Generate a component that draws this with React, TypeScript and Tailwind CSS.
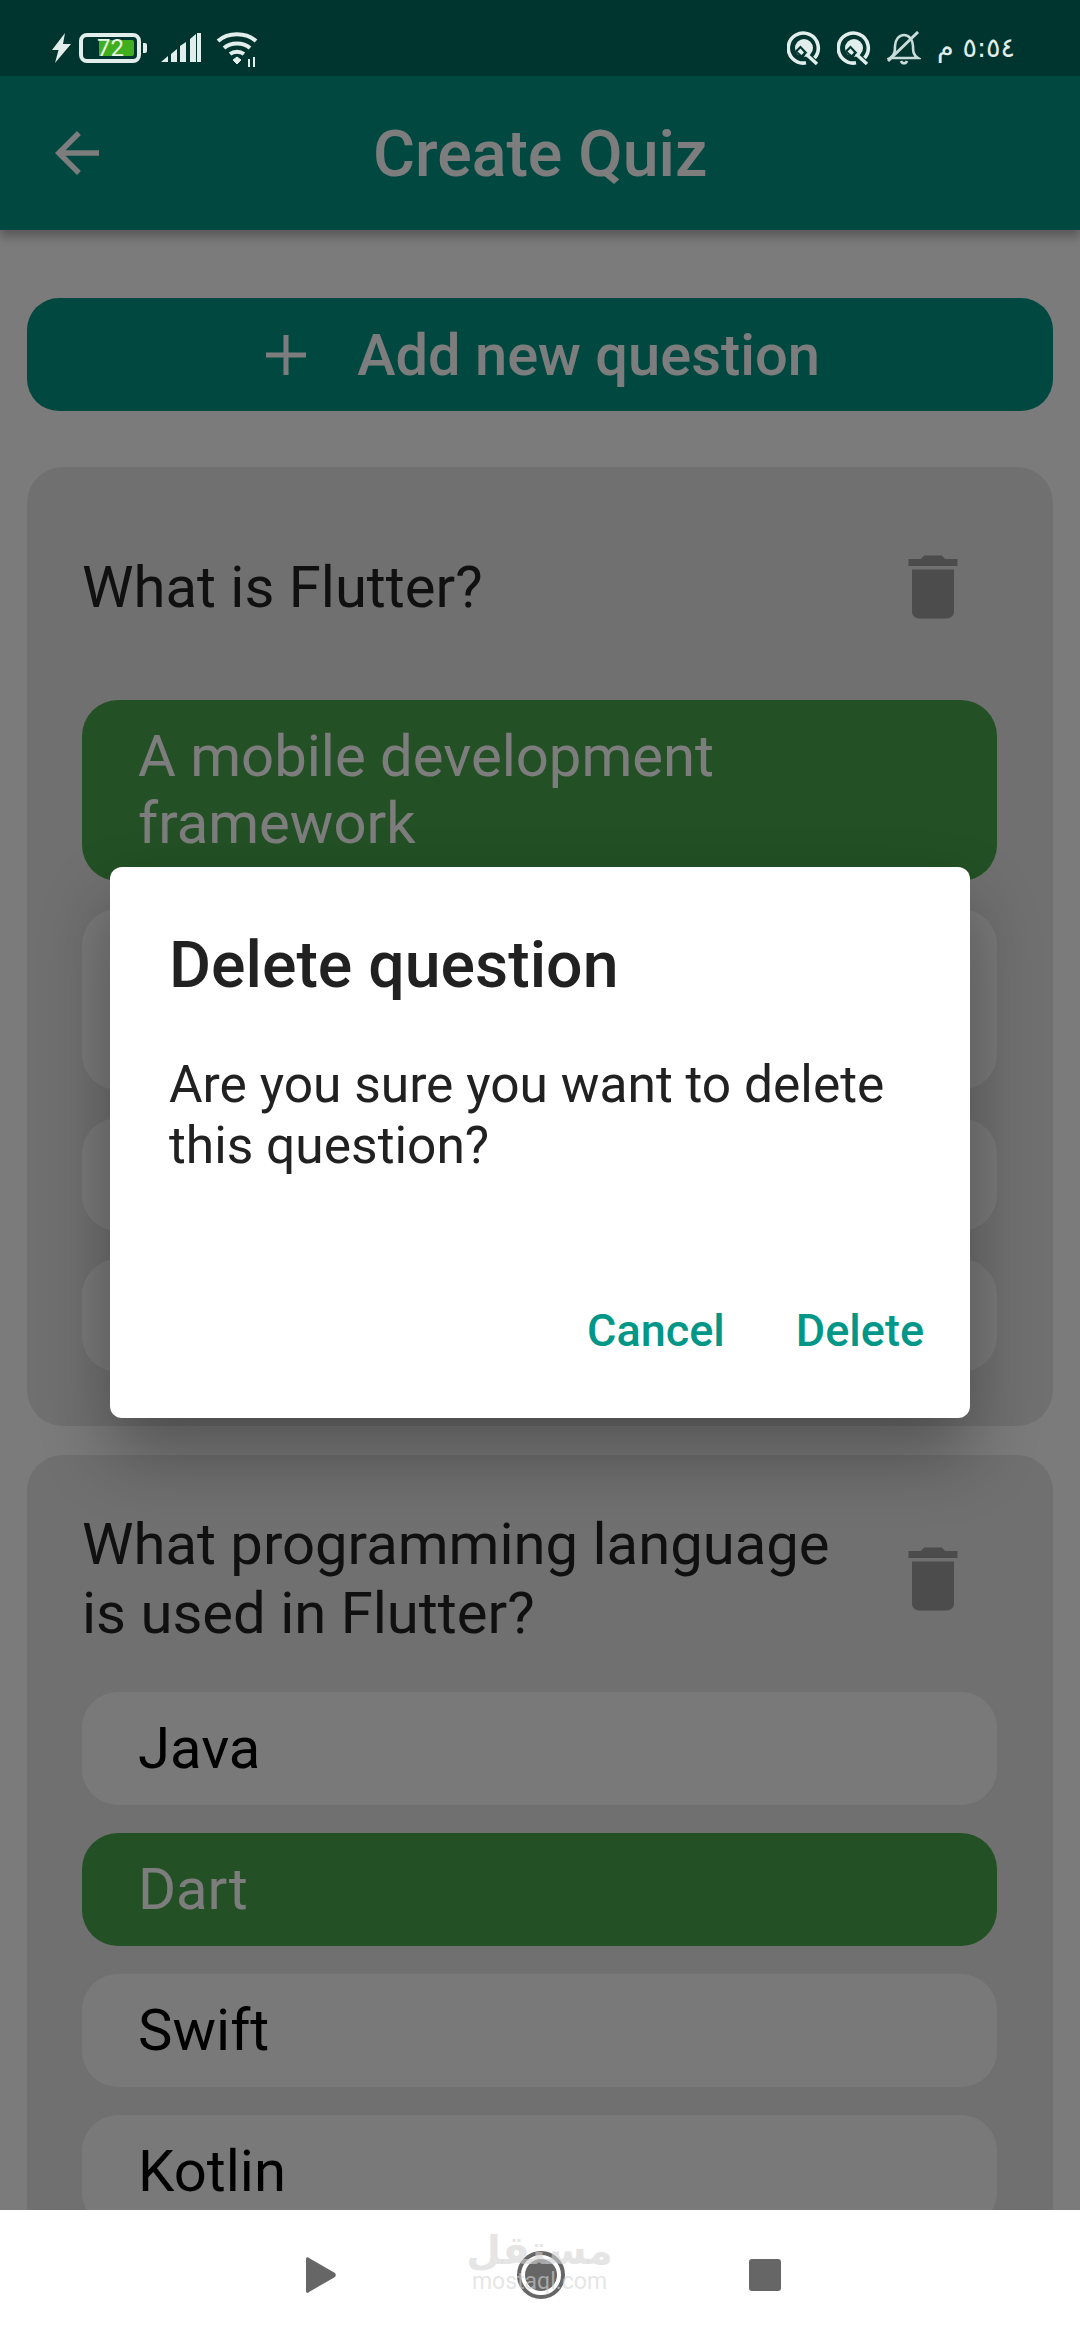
const Trash = () => (
  <svg viewBox="0 0 24 24" className="w-[84px] h-[84px] shrink-0" fill="#9b9b9b">
    <path d="M6 19c0 1.1.9 2 2 2h8c1.1 0 2-.9 2-2V7H6v12zM19 4h-3.5l-1-1h-5l-1 1H5v2h14V4z" />
  </svg>
);

const QIcon = () => (
  <svg width="34" height="34" viewBox="0 0 34 34" fill="none" className="mr-[16px]">
    <path d="M27.5 27 A15 15 0 1 0 19 31.8" stroke="#e2eeec" strokeWidth="3.6" fill="none" />
    <circle cx="17" cy="17" r="9" fill="#e2eeec" />
    <path d="M8 20 L13.5 14.5 L20.5 22 L15 28 Z" fill="#00352f" />
    <path d="M10.5 20.5 L13.5 17.5 L17 21.5 L14.5 24 Z" fill="#e2eeec" />
    <path d="M19 23 L30 33" stroke="#e2eeec" strokeWidth="3.4" />
  </svg>
);

const Option = ({ text, selected, tall }: { text?: string; selected?: boolean; tall?: boolean }) => (
  <div
    className={`rounded-[36px] px-[56px] py-[23px] text-[58px] leading-[67px] ${tall ? "h-[181px]" : "h-[113px]"} ${
      selected ? "bg-[#48a34c] text-white" : "bg-[#f7f7f7] text-black"
    }`}
  >
    {text}
  </div>
);

const Card = ({
  question,
  children,
  header,
}: {
  question: string;
  children: React.ReactNode;
  header: string;
}) => (
  <div className="rounded-[36px] bg-[#e4e4e4] pl-[55px] pr-[56px] pt-[55px] pb-[54px]">
    <div className={`flex items-center justify-between ${header}`}>
      <div className="w-[780px] text-[58px] leading-[69px] text-[#212121]">{question}</div>
      <div className="mr-[22px]">
        <Trash />
      </div>
    </div>
    <div className="flex flex-col gap-[28px]">{children}</div>
  </div>
);

export default function App() {
  return (
    <div
      className="relative w-[1080px] h-[2340px] overflow-hidden flex flex-col bg-white"
      style={{ fontFamily: "Roboto, 'Noto Sans', sans-serif" }}
    >
      <div className="relative h-[2210px] overflow-hidden bg-[#fafafa] flex flex-col shrink-0">
        {/* status bar */}
        <div className="relative z-30 h-[76px] shrink-0 bg-[#00352f] flex items-center justify-between pl-[52px] pr-[65px] pt-[24px] pb-[5px]">
          <div className="flex items-center">
            <svg width="19" height="30" viewBox="0 0 19 30" fill="#e2eeec" className="mr-[8px]">
              <path d="M13 0 L0 17 L6.5 17 L3 30 L19 11 L11 11 Z" />
            </svg>
            <div className="relative w-[62px] h-[30px] rounded-[8px] border-[4px] border-[#e2eeec] flex items-center">
              <div className="w-[35px] h-[16px] ml-[16px] rounded-r-[2px] bg-[#3fae1f]" />
              <div className="absolute left-[14px] top-[-4px] text-[24px] leading-[30px] text-[#e8f5e4]">72</div>
            </div>
            <div className="w-[4px] h-[10px] ml-[2px] rounded-r-[2px] bg-[#e2eeec]" />
            <svg width="40" height="30" viewBox="0 0 40 30" fill="#e2eeec" className="ml-[14px]">
              <path d="M0 29 L7 23 L7 29 Z M10 21 L16 16 L16 29 L10 29 Z M19 13 L25 9 L25 29 L19 29 Z M29 6 L35 1 L35 29 L29 29 Z" />
              <path d="M36 0 L40 0 L40 29 L36 29 Z" fill="#e2eeec" />
            </svg>
            <svg width="44" height="36" viewBox="0 0 44 36" fill="none" stroke="#e2eeec" className="ml-[15px] mt-[5px]">
              <path d="M2 9 C12 0 30 0 40 9" strokeWidth="4" />
              <path d="M8 16 C15 10 27 10 34 16" strokeWidth="4" />
              <path d="M14 22 C18 19 24 19 28 22" strokeWidth="4" />
              <path d="M17 28 L21 25 L25 28 L21 32 Z" fill="#e2eeec" strokeWidth="1" />
              <path d="M33 27 V35 M38 25 V35" strokeWidth="2" />
            </svg>
          </div>
          <div className="flex items-center">
            <QIcon />
            <QIcon />
            <svg width="34" height="34" viewBox="0 0 34 34" fill="none" stroke="#c9dcd9" strokeWidth="2.6" className="mr-[16px]">
              <path d="M3 27 C8 24 8 20 8 15 C8 9 12 4 17 4 C22 4 26 9 26 15 C26 20 26 24 31 27 Z" />
              <path d="M14 30 C15 33 19 33 20 30" />
              <path d="M1 30 L31 1" strokeWidth="3" />
            </svg>
            <div dir="rtl" className="text-[27px] leading-[34px] text-[#e2eeec]" style={{ fontFamily: "'DejaVu Sans', sans-serif" }}>
              ٥:٥٤ م
            </div>
          </div>
        </div>

        {/* app bar */}
        <div className="h-[154px] shrink-0 bg-[#009484] flex items-center relative z-10 shadow-[0_6px_10px_rgba(0,0,0,0.3)]">
          <svg viewBox="0 0 24 24" className="w-[66px] h-[66px] ml-[44px]" fill="#ffffff">
            <path d="M20 11H7.83l5.59-5.59L12 4l-8 8 8 8 1.41-1.41L7.83 13H20v-2z" />
          </svg>
          <div className="ml-[263px] pt-[2px] text-[64.4px] font-medium text-white leading-none">Create Quiz</div>
        </div>

        {/* content */}
        <div className="px-[27px] pt-[68px] flex flex-col">
          <div className="h-[113px] rounded-[32px] bg-[#009484] pl-[6px] flex items-center justify-center text-white mb-[56px]">
            <svg viewBox="0 0 40 40" className="w-[40px] h-[40px] mr-[51px]" fill="#ffffff">
              <path d="M17.5 0h5v17.5H40v5H22.5V40h-5V22.5H0v-5h17.5z" />
            </svg>
            <span className="pt-[2px] text-[57.8px] font-medium leading-none">Add new question</span>
          </div>
          <div className="flex flex-col gap-[29px]">
            <Card question="What is Flutter?" header="h-[130px] mb-[48px]">
              <Option text="A mobile development framework" selected tall />
              <Option tall />
              <Option />
              <Option />
            </Card>
            <Card question="What programming language is used in Flutter?" header="mb-[44px]">
              <Option text="Java" />
              <Option text="Dart" selected />
              <Option text="Swift" />
              <Option text="Kotlin" />
            </Card>
          </div>
        </div>

        {/* scrim */}
        <div className="absolute inset-0 z-20 bg-black/[0.51]" />

        {/* dialog */}
        <div className="absolute z-30 left-[110px] top-[867px] w-[860px] h-[551px] rounded-[12px] bg-white shadow-[0_36px_70px_rgba(0,0,0,0.32)] flex flex-col pl-[59px] pr-[46px]">
          <div className="mt-[62px] text-[64.4px] font-medium leading-[72px] text-[#212121]">Delete question</div>
          <div className="mt-[53px] text-[51.5px] leading-[61px] text-[#212121]">
            Are you sure you want to delete this question?
          </div>
          <div className="mt-auto mb-[62px] flex justify-end gap-[71px] text-[45px] font-medium leading-[50px] text-[#009688]">
            <span>Cancel</span>
            <span>Delete</span>
          </div>
        </div>
      </div>

      {/* nav bar */}
      <div className="relative flex-1 bg-white flex items-center pl-[306px]">
        <svg width="30" height="36" viewBox="0 0 30 36" className="mr-[181px]" fill="#666666">
          <path d="M0 2 C0 0 2 -0.5 3 1 L29 16 C30 17 30 19 29 20 L3 35 C2 36.500 0 36 0 34 Z" />
        </svg>
        <div className="w-[48px] h-[48px] rounded-full border-[4px] border-[#666666] p-[4px] mr-[184px]">
          <div className="w-full h-full rounded-full bg-[#666666]" />
        </div>
        <div className="w-[32px] h-[32px] rounded-[3px] bg-[#666666]" />
        <div className="absolute z-10 left-[474px] top-[18px] w-[131px] flex flex-col items-center text-[#d4d4d4]/60">
          <span className="text-[40px] leading-[44px] font-bold" style={{ fontFamily: "'DejaVu Sans', sans-serif" }}>مستقل</span>
          <span className="text-[23px] leading-[20px]">mostaql.com</span>
        </div>
      </div>
    </div>
  );
}
